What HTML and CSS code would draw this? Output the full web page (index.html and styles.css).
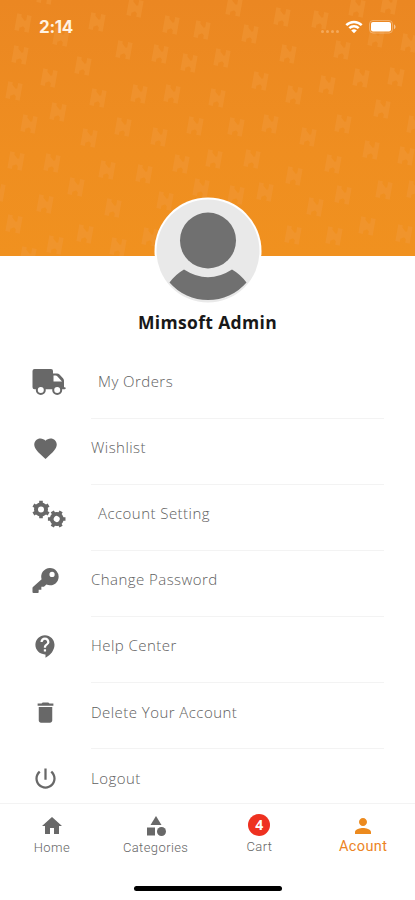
FILE: index.html
```html
<!DOCTYPE html>
<html lang="en">
<head>
  <meta charset="UTF-8" />
  <meta name="viewport" content="width=device-width, initial-scale=1.0" />
  <title>Account</title>
  <link rel="stylesheet" href="styles.css">
</head>
<body>
  <div class="phone">
    <header class="banner">
      <svg class="pattern" id="pattern" viewBox="0 0 415 256">
        <defs>
          <g id="mark">
            <path d="M-5 -8.500V8.500M5 -8.500V8.500M-5 -5L5 4M-5 4L5 -2" />
          </g>
        </defs>
      </svg>
      <div class="status">
        <span class="time">2:14</span>
        <div class="status-icons">
          <span class="dots"><i></i><i></i><i></i><i></i></span>
          <svg class="wifi" viewBox="0 0 18 14">
            <path d="M1.3 5.2a11 11 0 0 1 15.4 0M4.3 8.2a6.7 6.7 0 0 1 9.4 0" fill="none" stroke="#fff" stroke-width="2.5" />
            <path d="M9 13.2L6.2 10.5a4 4 0 0 1 5.6 0z" fill="#fff" />
          </svg>
          <svg class="battery" viewBox="0 0 27 14">
            <rect x=".5" y=".5" width="23" height="12.5" rx="3.5" fill="none" stroke="#fff" opacity=".3" />
            <rect x="2" y="2" width="20" height="9.5" rx="2" fill="#fff" />
            <path d="M25 4.5c2 .7 2 4 0 4.7z" fill="#fff" opacity=".5" />
          </svg>
        </div>
      </div>
    </header>

    <section class="profile">
      <svg class="avatar" viewBox="0 0 108 108">
        <circle cx="54" cy="54" r="53.5" fill="#fff" />
        <circle cx="54" cy="54" r="51.5" fill="#e9e9e9" />
        <circle cx="54" cy="43.5" r="28" fill="#707070" />
        <path d="M30 72.5Q54 88 78 72.5Q86 77 92.500 85.500A51 51 0 0 1 15.500 85.500Q22 77 30 72.500z" fill="#707070" />
      </svg>
      <h1 class="name">Mimsoft Admin</h1>
    </section>

    <ul class="menu">
      <li class="item wide">
        <svg class="icon" viewBox="0 0 34 28">
          <path fill-rule="evenodd" d="M2.500 1H19q2 0 2 2v2.500h4q1.500 0 2.500 1l3.500 3.700q1 1 1 2.500v6.500h.7q1 0 1 1t-1 1H2.500q-2 0-2-2V3q0-2 2-2zM21.500 7.500v6h8.500l-5-5.400q-.4-.6-1.200-.6z" />
          <circle class="wheel" cx="8.800" cy="22" r="4" />
          <circle class="wheel" cx="25.200" cy="22" r="4" />
        </svg>
        <span class="label">My Orders</span>
      </li>
      <li class="item">
        <svg class="icon heart" viewBox="0 0 24 24"><path d="M12 21.350l-1.450-1.320C5.400 15.360 2 12.280 2 8.500 2 5.420 4.420 3 7.500 3c1.740 0 3.410.81 4.500 2.090C13.090 3.810 14.760 3 16.500 3 19.580 3 22 5.420 22 8.500c0 3.780-3.400 6.860-8.550 11.540z" /></svg>
        <span class="label">Wishlist</span>
      </li>
      <li class="item wide">
        <svg class="icon" viewBox="0 0 34 28">
          <defs>
            <g id="gear">
              <circle r="5" fill="none" stroke="#686868" stroke-width="4" />
              <path d="M0 -8.800V-6M0 8.800V6M-7.600 -4.400L-5.200 -3M7.600 4.400L5.200 3M7.600 -4.400L5.200 -3M-7.600 4.400L-5.200 3" stroke="#686868" stroke-width="3.600" />
            </g>
          </defs>
          <use href="#gear" x="9" y="9.500" />
          <use href="#gear" transform="translate(24.700 19) rotate(30)" />
        </svg>
        <span class="label">Account Setting</span>
      </li>
      <li class="item">
        <svg class="icon key" viewBox="0 0 28 28"><path fill-rule="evenodd" d="M18.500 1a9 9 0 1 1-3.600 17.200L12.400 20.500H9.700v3H6.900v2.700q0 .8-.8.800H1.500q-1 0-1-1v-4.300q0-.6.5-1L10 12.800A9 9 0 0 1 18.500 1zM20.800 5a2.700 2.700 0 1 0 0 5.400 2.700 2.700 0 0 0 0-5.400z" /></svg>
        <span class="label">Change Password</span>
      </li>
      <li class="item">
        <svg class="icon help" viewBox="0 0 24 24"><path d="M11.500 2C6.810 2 3 5.810 3 10.500S6.810 19 11.500 19h.5v3c4.860-2.340 8-7 8-11.500C20 5.810 16.190 2 11.500 2zm1 14.500h-2v-2h2v2zm0-3.500h-2c0-3.250 3-3 3-5 0-1.100-.9-2-2-2s-2 .9-2 2h-2c0-2.210 1.790-4 4-4s4 1.790 4 4c0 2.500-3 2.750-3 5z" /></svg>
        <span class="label">Help Center</span>
      </li>
      <li class="item">
        <svg class="icon trash" viewBox="0 0 24 24"><path d="M6 19c0 1.100.9 2 2 2h8c1.100 0 2-.9 2-2V7H6v12zM19 4h-3.500l-1-1h-5l-1 1H5v2h14V4z" /></svg>
        <span class="label">Delete Your Account</span>
      </li>
      <li class="item">
        <svg class="icon power" viewBox="0 0 24 24"><path d="M13 3h-2v10h2V3zm4.830 2.170l-1.420 1.420C17.990 7.860 19 9.810 19 12c0 3.870-3.130 7-7 7s-7-3.130-7-7c0-2.190 1.010-4.140 2.580-5.420L6.170 5.170C4.230 6.820 3 9.260 3 12c0 4.970 4.030 9 9 9s9-4.030 9-9c0-2.740-1.230-5.180-3.170-6.830z" /></svg>
        <span class="label">Logout</span>
      </li>
    </ul>

    <nav class="tabs">
      <div class="tab home">
        <svg class="tab-icon" viewBox="0 0 24 24"><path d="M10 20v-6h4v6h5v-8h3L12 3 2 12h3v8z" /></svg>
        <span>Home</span>
      </div>
      <div class="tab categories">
        <svg class="tab-icon" viewBox="0 0 24 24"><path d="M12 2l-5.500 9h11z" /><circle cx="17.500" cy="17.500" r="4.500" /><path d="M3 13.500h8v8H3z" /></svg>
        <span>Categories</span>
      </div>
      <div class="tab cart">
        <b class="badge">4</b>
        <span>Cart</span>
      </div>
      <div class="tab account">
        <svg class="tab-icon" viewBox="0 0 24 24"><path d="M12 12c2.210 0 4-1.790 4-4s-1.790-4-4-4-4 1.790-4 4 1.790 4 4 4zm0 2c-2.670 0-8 1.340-8 4v2h16v-2c0-2.660-5.330-4-8-4z" /></svg>
        <span>Acount</span>
      </div>
    </nav>
    <div class="home-bar"></div>
  </div>
  <script>
    // centre points of the marks scattered over the banner
    const points = [
      [45,-5],[135,8],[97,22],[23,23],[171,25],[202,30],[61,37],[124,50],[20,55],[160,54],
      [189,63],[83,66],[49,78],[14,91],[139,94],[172,94],[98,98],[58,112],[29,124],[123,127],
      [195,126],[234,7],[282,17],[320,20],[357,8],[389,5],[250,34],[222,58],[288,54],[342,50],
      [376,38],[409,43],[260,81],[217,98],[294,95],[327,85],[361,78],[396,77],[382,109],[236,127],
      [270,124],[343,124],[415,125],[89,138],[159,137],[16,161],[52,163],[107,170],[144,174],[181,164],
      [76,187],[45,204],[113,208],[-3,192],[165,201],[201,188],[14,224],[85,234],[55,245],[118,247],
      [28,256],[150,237],[308,137],[214,159],[252,159],[333,164],[371,150],[406,156],[294,176],[265,192],
      [236,195],[343,195],[384,190],[415,190],[315,207],[293,235],[334,236],[367,226],[404,234]
    ];
    const pattern = document.getElementById('pattern');

    points.forEach(([x, y]) => {
      const mark = document.createElementNS('http://www.w3.org/2000/svg', 'use');
      mark.setAttribute('href', '#mark');
      mark.setAttribute('transform', `translate(${x} ${y}) rotate(10)`);
      pattern.appendChild(mark);
    });
  </script>
</body>
</html>
```
FILE: styles.css
```css
* {
  box-sizing: border-box;
}
body {
  margin: 0;
  font-family: 'Open Sans', sans-serif;
  background: #fff;
}
.phone {
  width: 415px;
  height: 900px;
  display: flex;
  flex-direction: column;
  overflow: hidden;
}
.banner {
  position: relative;
  flex: none;
  height: 256px;
  background: linear-gradient(#eb8722, #ef8e20 60%, #f0911f);
}
.pattern {
  position: absolute;
  left: 0;
  top: 0;
  width: 415px;
  height: 256px;
  fill: none;
  stroke: #f29a3c;
  stroke-width: 4.6;
  opacity: 0.45;
}
.status {
  position: relative;
  display: flex;
  justify-content: space-between;
  padding: 17px 19px 0 39px;
}
.time {
  font: 700 17px/21px Inter, sans-serif;
  color: #fff3e3;
  letter-spacing: -0.3px;
}
.status-icons {
  display: flex;
  padding-top: 3px;
}
.dots {
  display: flex;
  gap: 2px;
  padding: 10px 6px 0 0;
}
.dots i {
  width: 3px;
  height: 3px;
  border-radius: 50%;
  background: #f4a95a;
}
.wifi {
  width: 18px;
  height: 14px;
  margin-right: 6px;
}
.battery {
  width: 27px;
  height: 14px;
}
.profile {
  position: relative;
  flex: none;
  display: flex;
  flex-direction: column;
  align-items: center;
  height: 93px;
}
.avatar {
  flex: none;
  width: 108px;
  height: 108px;
  margin-top: -59px;
}
.name {
  margin: 5px 0 0;
  font-size: 17.5px;
  line-height: 24px;
  font-weight: 700;
  color: #181818;
  letter-spacing: 0.35px;
}
.menu {
  flex: none;
  height: 454px;
  margin: 0;
  padding: 3.5px 31px 0 32px;
  list-style: none;
  overflow: hidden;
}
.item {
  display: grid;
  grid-template-columns: 59px 1fr;
  align-items: center;
  height: 66.1px;
}
.icon {
  width: 27px;
  height: 27px;
  margin-bottom: 7px;
  fill: #686868;
}
.wide .icon {
  width: 34px;
  height: 28px;
}
.wheel {
  fill: #fff;
  stroke: #686868;
  stroke-width: 2;
}
.label {
  display: flex;
  align-items: center;
  height: 100%;
  padding-bottom: 8px;
  border-bottom: 1px solid #f3f3f3;
  font-size: 15px;
  font-weight: 300;
  color: #5e5e5e;
  letter-spacing: 0.45px;
}
.wide .label {
  padding-left: 7px;
}
.tabs {
  flex: none;
  display: grid;
  grid-template-columns: repeat(4, 1fr);
  height: 83px;
  border-top: 1px solid #f3f3f3;
  font-family: Roboto, sans-serif;
  font-size: 13px;
  font-weight: 300;
  color: #666;
}
.tab {
  display: flex;
  flex-direction: column;
  align-items: center;
  padding-top: 10px;
  line-height: 20px;
  letter-spacing: 0.4px;
}
.tab-icon {
  width: 24px;
  height: 24px;
  fill: #686868;
}
.badge {
  width: 22px;
  height: 22px;
  margin-bottom: 1px;
  border-radius: 50%;
  background: #ee3120;
  color: #fff;
  font: 700 14px/22px 'Open Sans', sans-serif;
  text-align: center;
  letter-spacing: 0;
}
.account {
  font-size: 14.5px;
  font-weight: 400;
  color: #ec8424;
}
.account .tab-icon {
  fill: #ec8a1e;
}
.account span {
  margin-top: -1px;
}
.home-bar {
  flex: none;
  width: 148px;
  height: 5px;
  margin: 0 auto;
  border-radius: 3px;
  background: #000;
}
```
